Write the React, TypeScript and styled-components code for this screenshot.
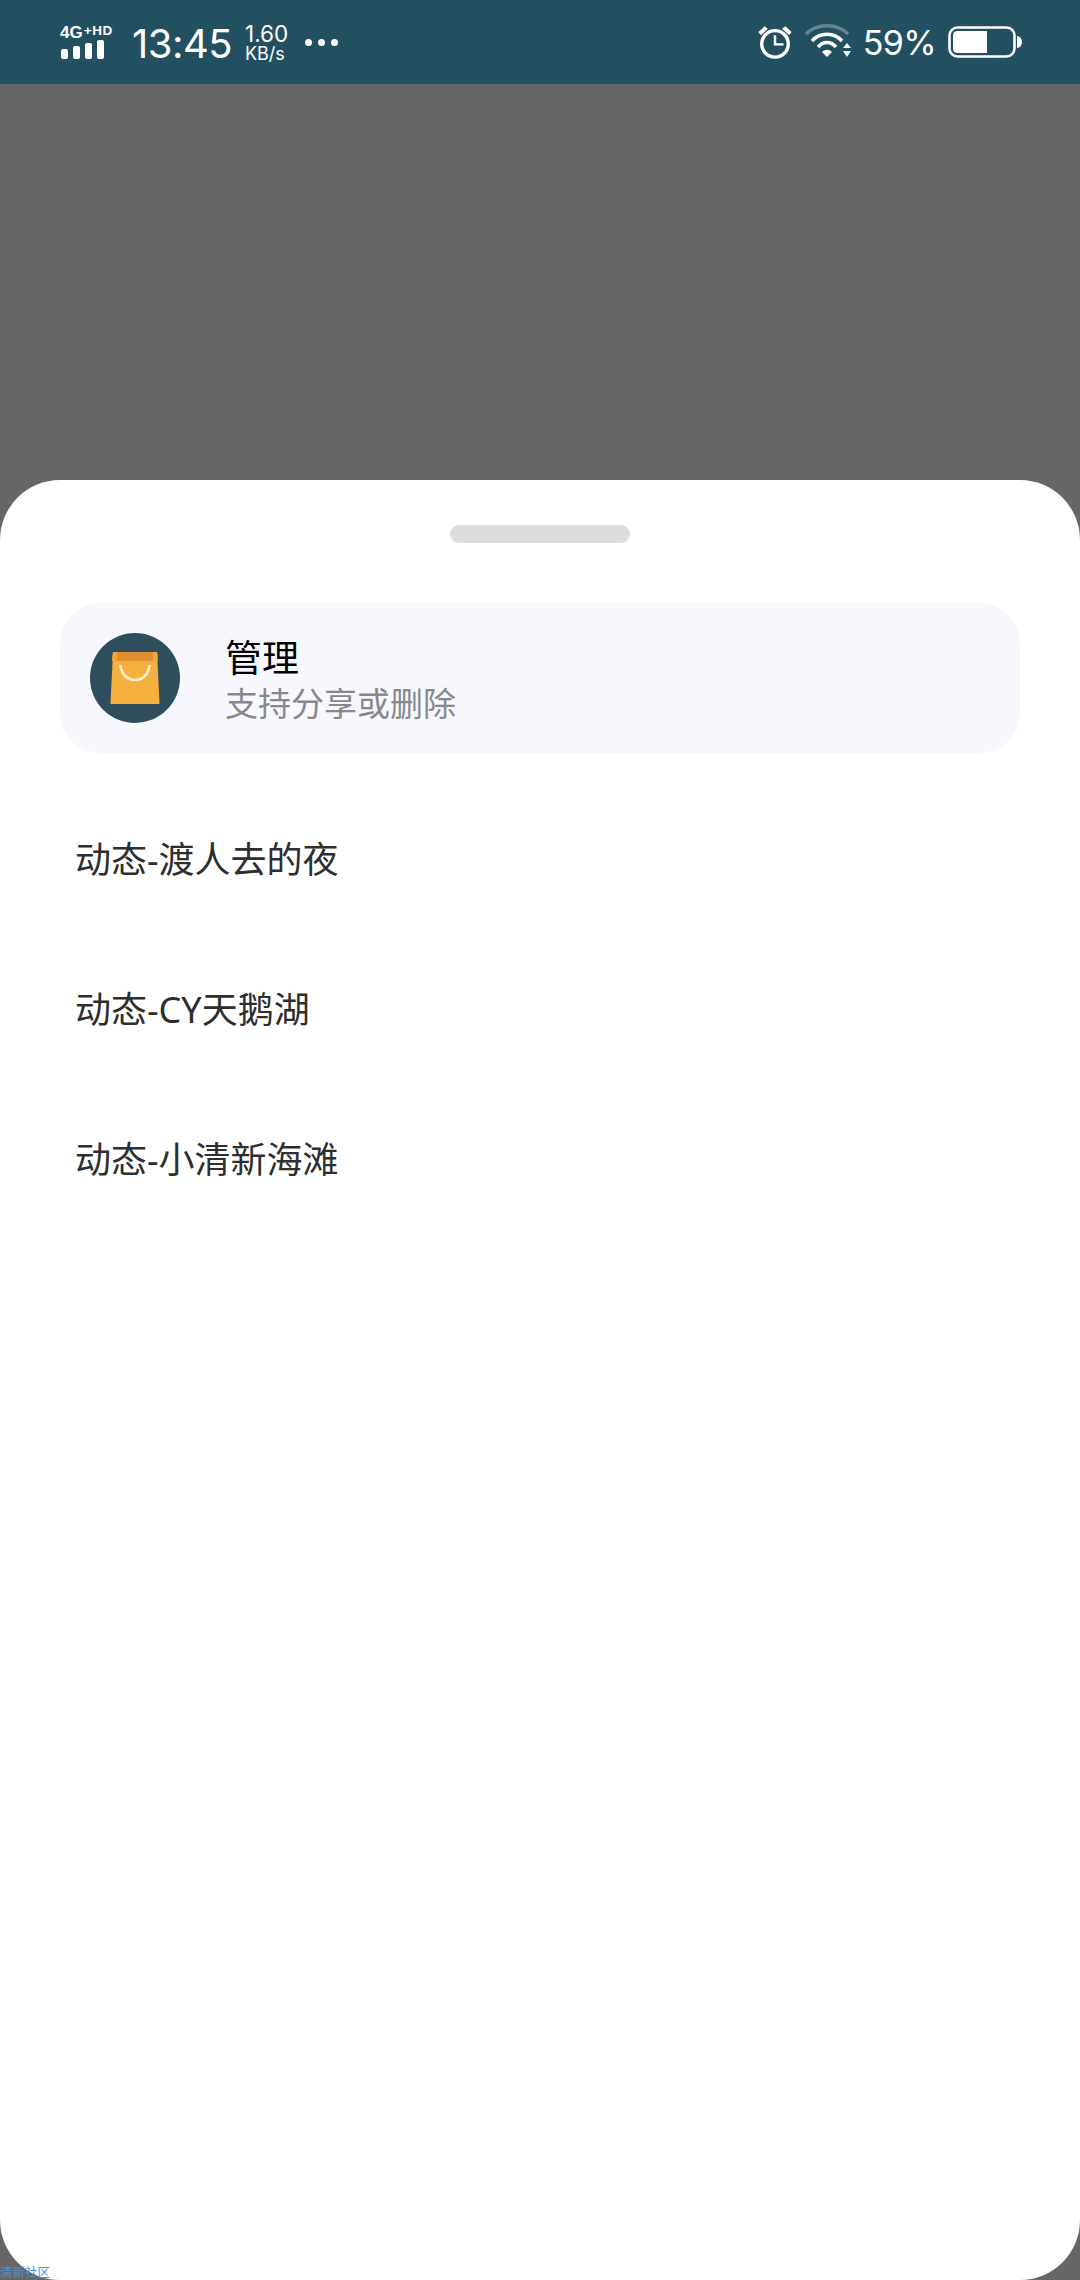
import styled, { createGlobalStyle } from "styled-components";

const GlobalStyle = createGlobalStyle`
  html, body {
    margin: 0;
    padding: 0;
    background: #666666;
  }
  * {
    box-sizing: border-box;
  }
`;

const Page = styled.div`
  position: relative;
  display: flex;
  flex-direction: column;
  width: 1080px;
  height: 2280px;
  overflow: hidden;
  background: #666666;
  font-family: "Noto Sans", "Noto Sans CJK SC", sans-serif;
`;

const StatusBar = styled.header`
  display: flex;
  align-items: center;
  justify-content: space-between;
  height: 84px;
  padding: 0 58px 0 60px;
  background: #225061;
  color: #ffffff;
  font-family: Inter, "Liberation Sans", sans-serif;
`;

const StatusGroup = styled.div`
  display: flex;
  align-items: center;
`;

const Signal = styled.div`
  display: flex;
  flex-direction: column;
  width: 58px;
  margin-right: 14px;
`;

const NetworkLabel = styled.div`
  display: flex;
  align-items: flex-start;
  height: 14px;
  font-family: "Liberation Sans", sans-serif;
  font-weight: 700;
  white-space: nowrap;
`;

const NetworkMain = styled.span`
  font-size: 17px;
  line-height: 15px;
`;

const NetworkExtra = styled.span`
  font-size: 13.5px;
  line-height: 11px;
  letter-spacing: 0.6px;
  margin-left: 1px;
`;

const Bars = styled.div`
  display: flex;
  align-items: flex-end;
  gap: 5px;
  height: 20px;
  margin-left: 1px;
`;

const Bar = styled.i<{ $h: number }>`
  display: block;
  width: 7px;
  height: ${(p) => p.$h}px;
  border-radius: 2px;
  background: #ffffff;
`;

const Clock = styled.span`
  font-size: 40px;
  font-weight: 400;
  line-height: 1;
  letter-spacing: -0.5px;
  width: 113px;
  margin-top: 4px;
`;

const Speed = styled.div`
  display: flex;
  flex-direction: column;
  width: 60px;
  margin-top: 2px;
`;

const SpeedValue = styled.span`
  font-size: 22.5px;
  line-height: 22px;
`;

const SpeedUnit = styled.span`
  font-size: 18px;
  line-height: 18px;
`;

const Dots = styled.div`
  display: flex;
  gap: 6px;
`;

const Dot = styled.i`
  display: block;
  width: 7px;
  height: 7px;
  border-radius: 50%;
  background: #ffffff;
`;

const StatusIcon = styled.svg<{ $gap: number }>`
  display: block;
  margin-right: ${(p) => p.$gap}px;
`;

const Percent = styled.span`
  font-size: 34px;
  line-height: 1;
  letter-spacing: -0.6px;
  margin-right: 12px;
  margin-top: 2px;
`;

const Sheet = styled.main`
  display: flex;
  flex-direction: column;
  align-items: center;
  flex: 1;
  margin-top: 396px;
  padding: 45px 60px 0;
  border-radius: 60px;
  background: #ffffff;
`;

const Handle = styled.div`
  width: 180px;
  height: 18px;
  border-radius: 9px;
  background: #dddddd;
  flex-shrink: 0;
`;

const ManageCard = styled.section`
  display: flex;
  align-items: center;
  gap: 45px;
  width: 100%;
  height: 150px;
  margin-top: 60px;
  padding-left: 30px;
  border-radius: 40px;
  background: #f7f8fe;
`;

const CardText = styled.div`
  display: flex;
  flex-direction: column;
  margin-top: 3px;
`;

const CardTitle = styled.span`
  font-size: 37px;
  line-height: 48px;
  color: #000000;
`;

const CardSubtitle = styled.span`
  font-size: 33px;
  line-height: 44px;
  color: #87878c;
`;

const ThemeList = styled.ul`
  display: flex;
  flex-direction: column;
  width: 100%;
  margin: 29px 0 0;
  padding: 0 0 0 15px;
  list-style: none;
`;

const ThemeRow = styled.li`
  display: flex;
  align-items: center;
  height: 150px;
  font-size: 36px;
  color: #2e2e2e;
`;

const Watermark = styled.span`
  position: absolute;
  left: 0;
  bottom: 0;
  font-size: 12.5px;
  line-height: 14px;
  color: #4a90cc;
`;

const themes = ["动态-渡人去的夜", "动态-CY天鹅湖", "动态-小清新海滩"];

function AlarmIcon() {
  return (
    <StatusIcon $gap={12} width="36" height="36" viewBox="0 0 38 36">
      <circle cx="19" cy="20" r="14" fill="none" stroke="#fff" strokeWidth="3.6" />
      <path d="M19 11V20.5H28" fill="none" stroke="#fff" strokeWidth="2.6" />
      <path d="M1.5 7.5 8 1.5l3.5 2.5L4 11z" fill="#fff" />
      <path d="M36.5 7.5 30 1.5l-3.5 2.5 7.5 7z" fill="#fff" />
    </StatusIcon>
  );
}

function WifiIcon() {
  return (
    <StatusIcon $gap={10} width="48" height="36" viewBox="0 0 48 36">
      <path d="M1 10C12 -1 32 -1 43 10" fill="none" stroke="#fff" strokeOpacity="0.3" strokeWidth="3.4" />
      <path d="M7 17C15 8 29 8 37 17" fill="none" stroke="#fff" strokeWidth="3.6" />
      <path d="M13 23C18 17 26 17 31 23" fill="none" stroke="#fff" strokeWidth="3.6" />
      <path d="M17 28C20 25 24 25 27 28L22 33z" fill="#fff" />
      <path d="M42 19l4 5h-8zM42 33l4-6h-8z" fill="#fff" />
    </StatusIcon>
  );
}

function BatteryIcon() {
  return (
    <svg width="74" height="32" viewBox="0 0 74 32" style={{ display: "block" }}>
      <rect x="1.5" y="1.5" width="65" height="29" rx="8" fill="none" stroke="#fff" strokeWidth="2.6" />
      <path d="M9 5H39V27H9A4.5 4.5 0 0 1 5 22.5V9.5A4.5 4.5 0 0 1 9 5z" fill="#fff" />
      <path d="M69 10a5 6 0 0 1 0 12z" fill="#fff" />
    </svg>
  );
}

function BagIcon() {
  return (
    <svg width="90" height="90" viewBox="0 0 90 90" style={{ flexShrink: 0 }}>
      <circle cx="45" cy="45" r="45" fill="#2f4d5d" />
      <path d="M23 19H67L69.5 70Q69.5 71 68.5 71H21.5Q20.5 71 20.5 70z" fill="#f6b03f" />
      <path d="M23 19H67L68 28H22z" fill="#e08f30" />
      <path d="M22 28L23 19H27V28zM68 28L67 19H63V28z" fill="#f2a63a" />
      <path d="M30.5 32C32 52 58 52 59.5 32" fill="none" stroke="#fdf1d0" strokeWidth="2.6" />
    </svg>
  );
}

export default function App() {
  return (
    <Page>
      <GlobalStyle />
      <StatusBar>
        <StatusGroup>
          <Signal>
            <NetworkLabel>
              <NetworkMain>4G</NetworkMain>
              <NetworkExtra>+HD</NetworkExtra>
            </NetworkLabel>
            <Bars>
              <Bar $h={10} />
              <Bar $h={13} />
              <Bar $h={16} />
              <Bar $h={19} />
            </Bars>
          </Signal>
          <Clock>13:45</Clock>
          <Speed>
            <SpeedValue>1.60</SpeedValue>
            <SpeedUnit>KB/s</SpeedUnit>
          </Speed>
          <Dots>
            <Dot />
            <Dot />
            <Dot />
          </Dots>
        </StatusGroup>
        <StatusGroup>
          <AlarmIcon />
          <WifiIcon />
          <Percent>59%</Percent>
          <BatteryIcon />
        </StatusGroup>
      </StatusBar>
      <Sheet>
        <Handle />
        <ManageCard>
          <BagIcon />
          <CardText>
            <CardTitle>管理</CardTitle>
            <CardSubtitle>支持分享或删除</CardSubtitle>
          </CardText>
        </ManageCard>
        <ThemeList>
          {themes.map((name) => (
            <ThemeRow key={name}>{name}</ThemeRow>
          ))}
        </ThemeList>
      </Sheet>
      <Watermark>清新社区</Watermark>
    </Page>
  );
}
